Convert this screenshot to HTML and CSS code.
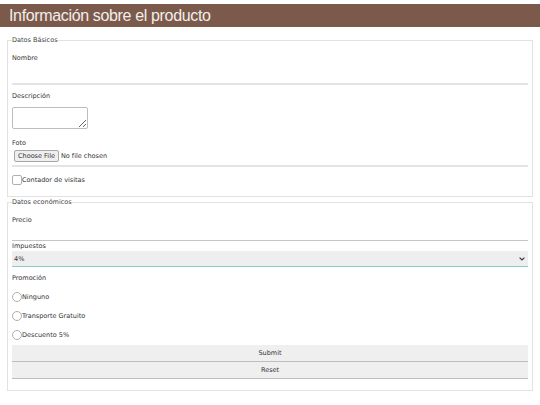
FILE: index.html
```html
<!DOCTYPE html>
<html lang="es">
<head>
<meta charset="utf-8">
<title>Información sobre el producto</title>
<link rel="stylesheet" href="styles.css">
</head>
<body>
<h1 class="title">Información sobre el producto</h1>
<form class="form">
  <fieldset class="group">
    <legend class="legend">Datos Básicos</legend>
    <label class="label label-first" for="nombre">Nombre</label>
    <input class="text text-tall" type="text" id="nombre">
    <label class="label label-mid" for="desc">Descripción</label>
    <textarea class="area" id="desc"></textarea>
    <label class="label label-foto" for="foto">Foto</label>
    <input class="file" type="file" id="foto">
    <div class="check-row">
      <input class="check" type="checkbox" id="contador">
      <label for="contador">Contador de visitas</label>
    </div>
  </fieldset>
  <fieldset class="group group-eco">
    <legend class="legend">Datos económicos</legend>
    <label class="label label-first" for="precio">Precio</label>
    <input class="text text-short" type="number" id="precio">
    <label class="label" for="imp">Impuestos</label>
    <div class="select-wrap">
      <select class="select" id="imp">
        <option>4%</option>
        <option>10%</option>
        <option>21%</option>
      </select>
      <svg class="select-arrow" width="6" height="4" viewBox="0 0 6 4" aria-hidden="true">
        <path d="M0.6 0.6 L3 3 L5.4 0.6" fill="none" stroke="#333" stroke-width="1.1"/>
      </svg>
    </div>
    <div class="label label-promo">Promoción</div>
    <div class="radio-row radio-first">
      <input class="radio" type="radio" name="promo" id="p1">
      <label for="p1">Ninguno</label>
    </div>
    <div class="radio-row">
      <input class="radio" type="radio" name="promo" id="p2">
      <label for="p2">Transporte Gratuito</label>
    </div>
    <div class="radio-row">
      <input class="radio" type="radio" name="promo" id="p3">
      <label for="p3">Descuento 5%</label>
    </div>
    <div class="actions">
      <input class="btn" type="submit" value="Submit">
      <input class="btn" type="reset" value="Reset">
    </div>
  </fieldset>
</form>
</body>
</html>
```
FILE: styles.css
```css
* { box-sizing: border-box; }

body {
  margin: 0;
  padding-top: 4px;
  font-family: "DejaVu Sans", Verdana, sans-serif;
  font-size: 6.5px;
  line-height: 10px;
  color: #333;
  background: #fff;
}

.title {
  margin: 0;
  height: 23px;
  line-height: 24px;
  padding-left: 9px;
  background: #7b5a4b;
  color: #f2eeec;
  font-family: "Liberation Sans", Arial, sans-serif;
  font-size: 16px;
  letter-spacing: -0.35px;
  font-weight: normal;
}

.form {
  margin: 8px 7px 0 7px;
}

.group {
  margin: 0;
  border: 1px solid #e2e2e2;
  padding: 0 4px 10px 4px;
  min-width: 0;
}

.group-eco {
  padding-bottom: 11px;
}

.legend {
  padding: 0;
  color: #444;
  line-height: 10px;
}

.label {
  display: block;
  line-height: 10px;
}

.label-first { margin-top: 8px; }
.label-mid { margin-top: 6px; }
.label-foto { margin-top: 9px; }
.label-promo { margin-top: 6px; }

.text {
  display: block;
  width: 100%;
  border: none;
  background: transparent;
  font: inherit;
  outline: none;
  padding: 0 2px;
}

.text-tall {
  height: 22px;
  border-bottom: 2px solid #e4e4e4;
}

.text-short {
  height: 16px;
  border-bottom: 1px solid #c4c4c4;
}

.area {
  display: block;
  margin-top: 6px;
  width: 76px;
  height: 22px;
  border: 1px solid #bdbdbd;
  border-radius: 2px;
  font: inherit;
}

.file {
  display: block;
  width: 100%;
  margin-top: 1px;
  padding: 1px 0 3px 0;
  border: none;
  border-bottom: 2px solid #e4e4e4;
  font: inherit;
  line-height: 12px;
  color: #333;
}

.file::file-selector-button {
  font: inherit;
  height: 12px;
  line-height: 10px;
  padding: 0 3px;
  margin: 0 2px 0 2px;
  border: 1px solid #a8a8a8;
  border-radius: 2px;
  background: #efefef;
  color: #333;
}

.check-row,
.radio-row {
  display: flex;
  align-items: center;
  height: 12px;
  line-height: 12px;
}

.check-row { margin-top: 7px; }
.radio-row { margin-top: 7px; }
.radio-first { margin-top: 8px; }

.check {
  appearance: none;
  margin: 0;
  width: 10px;
  height: 10px;
  border: 1px solid #b0b0b0;
  border-radius: 2px;
  background: #fff;
}

.radio {
  appearance: none;
  margin: 0;
  width: 10px;
  height: 10px;
  border: 1px solid #b0b0b0;
  border-radius: 50%;
  background: #fff;
}

.select-wrap {
  position: relative;
}

.select {
  appearance: none;
  display: block;
  width: 100%;
  height: 16px;
  border: none;
  border-bottom: 1px solid #8ccac3;
  border-radius: 0;
  background: #eeeeee;
  font: inherit;
  color: #333;
  padding: 0 2px;
  outline: none;
}

.select-arrow {
  position: absolute;
  right: 3px;
  top: 6px;
}

.actions {
  margin-top: 4px;
  display: flex;
  flex-direction: column;
}

.btn {
  display: block;
  width: 100%;
  height: 17px;
  border: none;
  border-bottom: 1px solid #bdbdbd;
  border-radius: 0;
  background: #efefef;
  font: inherit;
  color: #333;
  padding: 0;
}
```
